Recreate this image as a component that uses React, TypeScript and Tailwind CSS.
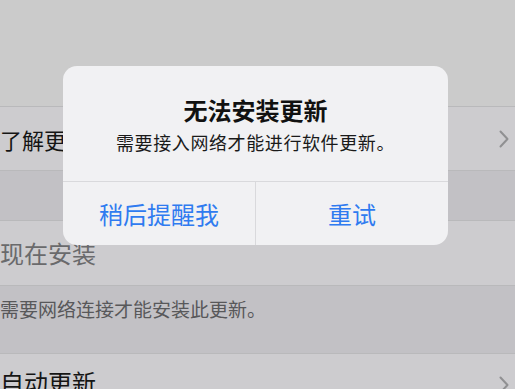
const font = { fontFamily: '"Noto Sans CJK SC", "Noto Sans", sans-serif' };

function Chevron() {
  return (
    <svg width="10" height="18" viewBox="0 0 10 18" className="shrink-0">
      <path d="M1.5 1.5 L8.5 9 L1.5 16.5" fill="none" stroke="#909092" strokeWidth="2" strokeLinecap="round" strokeLinejoin="round" />
    </svg>
  );
}

export default function App() {
  return (
    <div className="relative w-[515px] h-[389px] overflow-hidden bg-[#cbcbcb]" style={font}>
      {/* Settings list, dimmed */}
      <div className="flex flex-col">
        <div className="h-[107px] border-b border-[#b9b9bb] bg-[#cbcbcb]" />
        <div className="h-[64px] flex items-center justify-between pr-[6px] bg-[#cdcccf] border-b border-[#b9b9bb]">
          <span className="text-[22px] leading-none text-[#151515]">了解更多</span>
          <Chevron />
        </div>
        <div className="h-[50px] bg-[#c2c1c5] border-b border-[#b9b9bb]" />
        <div className="h-[65px] flex items-center bg-[#cdcccf] border-b border-[#b9b9bb]">
          <span className="text-[24px] leading-none text-[#6a6a6c]">现在安装</span>
        </div>
        <div className="h-[68px] bg-[#c2c1c5] border-b border-[#b9b9bb] pt-[11px]">
          <span className="text-[19px] leading-[24px] text-[#58585a]">需要网络连接才能安装此更新。</span>
        </div>
        <div className="h-[60px] flex items-start justify-between pr-[6px] pt-[16px] bg-[#cdcccf]">
          <span className="text-[24px] leading-none text-[#151515]">自动更新</span>
          <div className="pt-[6px]">
            <Chevron />
          </div>
        </div>
      </div>

      {/* Alert */}
      <div className="absolute left-[63px] top-[66px] w-[385px] h-[179px] rounded-[14px] bg-[#f1f1f3] flex flex-col overflow-hidden">
        <div className="h-[116px] flex flex-col items-center pt-[30px] border-b border-[#d9d9dc]">
          <div className="text-[24px] leading-[28px] font-semibold text-[#111]">无法安装更新</div>
          <div className="mt-[6px] text-[18px] leading-[24px] text-[#1a1a1a] tracking-[0.6px]">需要接入网络才能进行软件更新。</div>
        </div>
        <div className="flex-1 flex">
          <button className="flex-1 flex items-center justify-center text-[24px] text-[#2f7bf0] border-r border-[#d9d9dc]">
            稍后提醒我
          </button>
          <button className="flex-1 flex items-center justify-center text-[24px] text-[#2f7bf0]">
            重试
          </button>
        </div>
      </div>
    </div>
  );
}
